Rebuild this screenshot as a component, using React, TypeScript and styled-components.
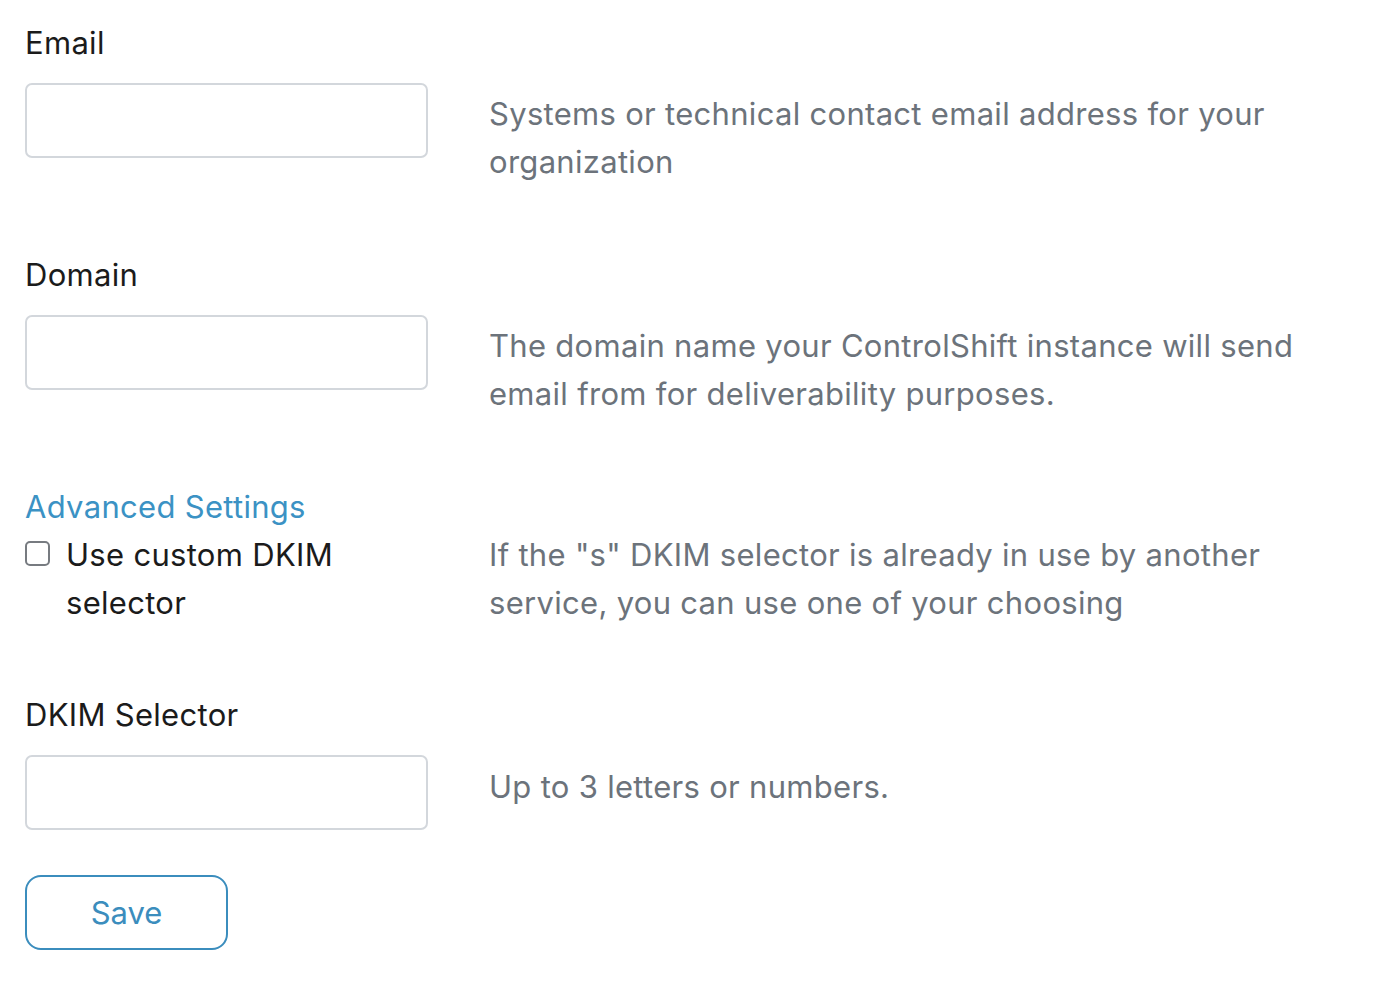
import React from "react";
import styled, { createGlobalStyle } from "styled-components";

const Global = createGlobalStyle`
  html, body { margin: 0; padding: 0; background: #ffffff; }
  body { font-family: "Inter", "Noto Sans", sans-serif; }
`;

const Page = styled.div`
  padding: 19px 25px 40px 25px;
  font-size: 31px;
  line-height: 48px;
  letter-spacing: 0.3px;
  color: #1b1b1b;
`;

const Section = styled.section<{ $gap?: number }>`
  display: grid;
  grid-template-columns: 403px 1fr;
  column-gap: 61px;
  margin-bottom: ${(p) => p.$gap ?? 65}px;
`;

const Label = styled.label`
  grid-column: 1 / -1;
  display: block;
  margin-bottom: 16px;
`;

const Input = styled.input`
  box-sizing: border-box;
  width: 403px;
  height: 75px;
  border: 2px solid #d3d7dc;
  border-radius: 7px;
  background: #fff;
  font: inherit;
  padding: 0 16px;
  margin: 0;
  outline: none;
`;

const Help = styled.p<{ $offset?: number }>`
  margin: ${(p) => p.$offset ?? 7}px 0 0 0;
  color: #6c737b;
  max-width: 830px;
`;

const LinkTitle = styled.a`
  grid-column: 1 / -1;
  color: #3b92c4;
  text-decoration: none;
  display: block;
`;

const CheckRow = styled.label`
  display: flex;
  align-items: flex-start;
  gap: 16px;
`;

const Box = styled.span`
  box-sizing: border-box;
  flex: none;
  width: 25px;
  height: 25px;
  margin-top: 10px;
  border: 2px solid #777b80;
  border-radius: 5px;
  background: #fff;
`;

const Button = styled.button`
  box-sizing: border-box;
  width: 203px;
  height: 75px;
  border: 2px solid #3b8dbd;
  border-radius: 16px;
  background: #fff;
  color: #3b8dbd;
  font: inherit;
  padding: 0;
  cursor: pointer;
`;

export default function App() {
  return (
    <>
      <Global />
      <Page>
        <Section>
          <Label>Email</Label>
          <Input type="text" />
          <Help>Systems or technical contact email address for your organization</Help>
        </Section>
        <Section>
          <Label>Domain</Label>
          <Input type="text" />
          <Help>
            The domain name your ControlShift instance will send email from for deliverability purposes.
          </Help>
        </Section>
        <Section $gap={64}>
          <LinkTitle href="#">Advanced Settings</LinkTitle>
          <CheckRow>
            <Box />
            <span>Use custom DKIM selector</span>
          </CheckRow>
          <Help $offset={0}>
            If the "s" DKIM selector is already in use by another service, you can use one of your choosing
          </Help>
        </Section>
        <Section $gap={45}>
          <Label>DKIM Selector</Label>
          <Input type="text" />
          <Help $offset={8}>Up to 3 letters or numbers.</Help>
        </Section>
        <Button type="button">Save</Button>
      </Page>
    </>
  );
}
